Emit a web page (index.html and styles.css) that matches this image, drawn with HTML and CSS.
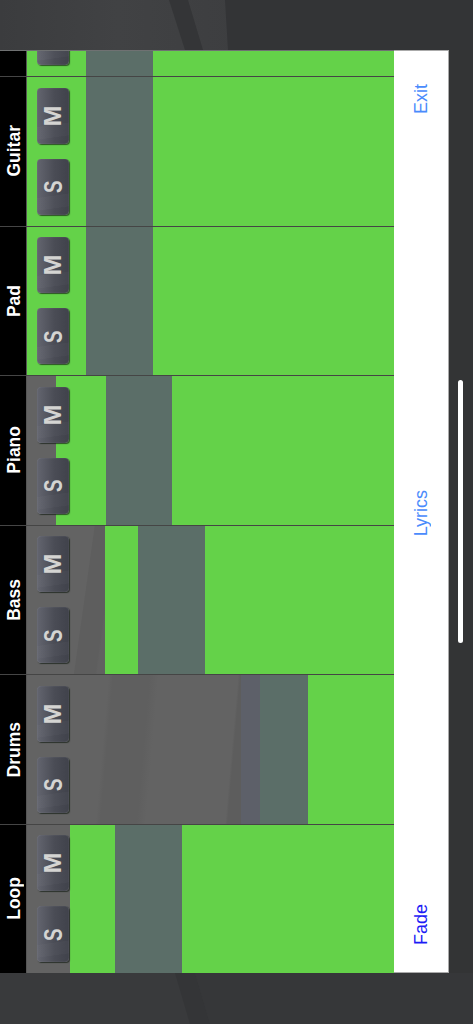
FILE: index.html
```html
<!DOCTYPE html>
<html lang="en">
<head>
    <meta charset="UTF-8">
    <meta name="viewport" content="width=device-width, initial-scale=1.0">
    <title>Mixer</title>
    <link rel="stylesheet" href="styles.css">
</head>
<body>

<div class="wall-top">
    <svg width="473" height="50" viewBox="0 0 473 50">
        <defs>
            <linearGradient id="wallTop" x1="0" x2="1" y1="0" y2="0">
                <stop offset="0" stop-color="#3b3c3e"/>
                <stop offset="0.25" stop-color="#414244"/>
                <stop offset="0.5" stop-color="#3d3e40"/>
            </linearGradient>
        </defs>
        <rect width="473" height="50" fill="url(#wallTop)"/>
        <polygon points="169,0 188,0 203,50 185,50" fill="#343537"/>
        <polygon points="225,0 473,0 473,50 228,50" fill="#333436"/>
    </svg>
</div>

<div class="main">
    <div class="tracks">
        <div class="row row-cut">
            <div class="name"></div>
            <div class="lane">
                <div class="seg green" style="width:59px"></div>
                <div class="seg band" style="width:67px"></div>
                <div class="seg green fill"></div>
            </div>
            <div class="btns btns-cut">
                <div class="btn"></div>
            </div>
        </div>
        <div class="row">
            <div class="name"><span>Guitar</span></div>
            <div class="lane">
                <div class="seg green" style="width:59px"></div>
                <div class="seg band" style="width:67px"></div>
                <div class="seg green fill"></div>
            </div>
            <div class="btns">
                <div class="btn"><span class="mute">M</span></div>
                <div class="btn"><span class="solo">S</span></div>
            </div>
        </div>
        <div class="row">
            <div class="name"><span>Pad</span></div>
            <div class="lane">
                <div class="seg green" style="width:59px"></div>
                <div class="seg band" style="width:67px"></div>
                <div class="seg green fill"></div>
            </div>
            <div class="btns">
                <div class="btn"><span class="mute">M</span></div>
                <div class="btn"><span class="solo">S</span></div>
            </div>
        </div>
        <div class="row">
            <div class="name"><span>Piano</span></div>
            <div class="lane">
                <div class="seg gray" style="width:29px"></div>
                <div class="seg green" style="width:50px"></div>
                <div class="seg band" style="width:66px"></div>
                <div class="seg green fill"></div>
            </div>
            <div class="btns">
                <div class="btn"><span class="mute">M</span></div>
                <div class="btn"><span class="solo">S</span></div>
            </div>
        </div>
        <div class="row">
            <div class="name"><span>Bass</span></div>
            <div class="lane">
                <div class="seg gray streak-bass" style="width:78px"></div>
                <div class="seg green" style="width:33px"></div>
                <div class="seg band" style="width:67px"></div>
                <div class="seg green fill"></div>
            </div>
            <div class="btns">
                <div class="btn"><span class="mute">M</span></div>
                <div class="btn"><span class="solo">S</span></div>
            </div>
        </div>
        <div class="row">
            <div class="name"><span>Drums</span></div>
            <div class="lane">
                <div class="seg gray streak-drums" style="width:214px"></div>
                <div class="seg blue" style="width:19px"></div>
                <div class="seg band" style="width:48px"></div>
                <div class="seg green fill"></div>
            </div>
            <div class="btns">
                <div class="btn"><span class="mute">M</span></div>
                <div class="btn"><span class="solo">S</span></div>
            </div>
        </div>
        <div class="row">
            <div class="name"><span>Loop</span></div>
            <div class="lane">
                <div class="seg gray" style="width:43px"></div>
                <div class="seg green" style="width:45px"></div>
                <div class="seg band" style="width:67px"></div>
                <div class="seg green fill"></div>
            </div>
            <div class="btns">
                <div class="btn"><span class="mute">M</span></div>
                <div class="btn"><span class="solo">S</span></div>
            </div>
        </div>
    </div>

    <div class="toolbar">
        <span class="tool">Exit</span>
        <span class="tool tool-lyrics">Lyrics</span>
        <span class="tool tool-fade">Fade</span>
    </div>
</div>

<div class="wall-bottom">
    <svg width="473" height="51" viewBox="0 0 473 51">
        <rect width="473" height="51" fill="#393a3c"/>
        <polygon points="175,0 195,0 210,51 190,51" fill="#343537"/>
        <polygon points="195,0 473,0 473,51 210,51" fill="#363739"/>
    </svg>
</div>

<div class="scroll-bar"></div>

</body>
</html>
```

FILE: styles.css
```css
body {
    margin: 0;
    width: 473px;
    height: 1024px;
    overflow: hidden;
    position: relative;
    background-color: #333435;
    font-family: "Liberation Sans", Arial, sans-serif;
}
svg {
    display: block;
}
.wall-top {
    height: 50px;
}
.wall-bottom {
    height: 51px;
}
.main {
    display: flex;
    height: 923px;
}
.tracks {
    width: 394px;
    display: flex;
    flex-direction: column;
    background-color: #636363;
}
.row {
    flex: 1;
    display: flex;
    position: relative;
    box-sizing: border-box;
    border-top: 1px solid #454545;
    overflow: hidden;
}
.row-cut {
    flex: none;
    height: 26px;
    border-top: 1px solid #6f7172;
}
.name {
    width: 27px;
    box-sizing: border-box;
    padding-left: 2px;
    background-color: #000;
    border-right: 1px solid #555;
    color: #fff;
    font-weight: bold;
    font-size: 17.5px;
    display: flex;
    align-items: center;
    justify-content: center;
}
.name span {
    writing-mode: vertical-rl;
    transform: rotate(180deg);
}
.lane {
    flex: 1;
    display: flex;
    box-shadow: inset 0 1px 0 rgba(70, 70, 70, 0.35);
}
.seg {
    height: 100%;
}
.fill {
    flex: 1;
}
.green {
    background-color: #64d249;
}
.band {
    background-color: #5b6e68;
}
.blue {
    background-color: #5d6069;
}
.gray {
    background-color: #636363;
}
.streak-bass {
    background-image: linear-gradient(98deg, transparent 68%, #5e5e5e 69%, #5e5e5e 90%, #616161 92%);
}
.streak-drums {
    background-image: linear-gradient(95deg, transparent 36%, #5f5f5f 38%, #5f5f5f 54%, transparent 58%, transparent 93%, #5d5d5d 94%);
}
.btns {
    position: absolute;
    left: 37px;
    top: 0;
    bottom: 0;
    display: flex;
    flex-direction: column;
    justify-content: center;
    gap: 15px;
}
.btns-cut {
    justify-content: flex-end;
    padding-bottom: 11px;
}
.btn {
    flex: none;
    width: 32px;
    height: 56px;
    border-radius: 4px;
    display: flex;
    align-items: center;
    justify-content: center;
    color: #d4d4d2;
    font-weight: bold;
    background-image:
        linear-gradient(172deg, transparent 64%, rgba(255, 255, 255, 0.025) 65%, rgba(255, 255, 255, 0.025) 85%, transparent 86%),
        linear-gradient(90deg, #63656f, #4a4c55 55%, #40424b);
    box-shadow: 1px 1px 1px rgba(20, 30, 20, 0.7), inset 0 0 1px rgba(255, 255, 255, 0.35);
}
.btn span {
    writing-mode: vertical-rl;
    line-height: 1;
}
.mute {
    font-size: 24px;
    transform: rotate(180deg) scaleY(1.05);
}
.solo {
    font-size: 26px;
    transform: rotate(180deg) scaleY(0.72);
}
.toolbar {
    width: 55px;
    box-sizing: border-box;
    background-color: #fff;
    border-top: 1px solid #aaa;
    border-right: 1px solid #aaa;
    border-bottom: 1px solid #aaa;
    display: flex;
    flex-direction: column;
    align-items: center;
    justify-content: space-between;
    padding: 33px 0 27px;
    font-size: 18px;
    color: #4a8bfc;
}
.tool {
    writing-mode: vertical-rl;
    transform: rotate(180deg);
}
.tool-lyrics {
    margin-top: 9px;
}
.tool-fade {
    color: #1c1cf5;
}
.scroll-bar {
    position: absolute;
    left: 458px;
    top: 380px;
    width: 5px;
    height: 263px;
    border-radius: 3px;
    background-color: #fff;
}
```
